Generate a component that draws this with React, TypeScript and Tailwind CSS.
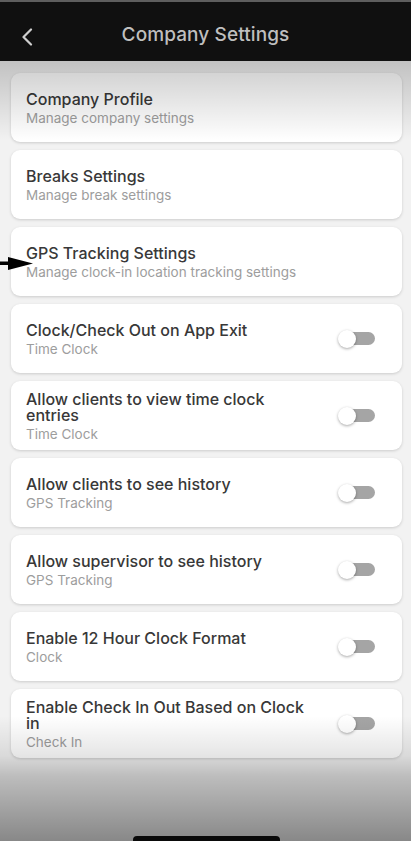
import React from 'react';

interface SettingItem {
  title: string;
  subtitle: string;
  toggle?: boolean;
}

const items: SettingItem[] = [
  { title: 'Company Profile', subtitle: 'Manage company settings' },
  { title: 'Breaks Settings', subtitle: 'Manage break settings' },
  { title: 'GPS Tracking Settings', subtitle: 'Manage clock-in location tracking settings' },
  { title: 'Clock/Check Out on App Exit', subtitle: 'Time Clock', toggle: true },
  { title: 'Allow clients to view time clock entries', subtitle: 'Time Clock', toggle: true },
  { title: 'Allow clients to see history', subtitle: 'GPS Tracking', toggle: true },
  { title: 'Allow supervisor to see history', subtitle: 'GPS Tracking', toggle: true },
  { title: 'Enable 12 Hour Clock Format', subtitle: 'Clock', toggle: true },
  { title: 'Enable Check In Out Based on Clock in', subtitle: 'Check In', toggle: true },
];

const Toggle: React.FC = () => (
  <div className="relative w-[37px] h-[18px] flex-shrink-0">
    <div className="absolute right-0 top-[2.5px] w-[31px] h-[13px] rounded-full bg-[#a5a5a5]" />
    <div className="absolute left-0 top-0 w-[18px] h-[18px] rounded-full bg-white shadow-[0_1px_3px_rgba(0,0,0,0.35)]" />
  </div>
);

export default function App() {
  return (
    <div
      className="relative w-[411px] h-[841px] overflow-hidden bg-[#f2f2f2] flex flex-col"
      style={{ fontFamily: 'Inter, "Noto Sans", sans-serif' }}
    >
      {/* top strip + header */}
      <div className="h-[2px] bg-[#5e5e5e]" />
      <div className="relative z-10 h-[59px] bg-[#101010] flex items-center justify-center pt-[7px]">
        <svg
          className="absolute left-[21px] top-[26px]"
          width="12"
          height="18"
          viewBox="0 0 12 18"
          fill="none"
        >
          <path d="M10 1.5 L2.5 9 L10 16.5" stroke="#cfcfcf" strokeWidth="2.2" strokeLinecap="round" strokeLinejoin="round" />
        </svg>
        <span className="text-[19px] font-medium text-[#bfbfbf] tracking-[0.1px]">Company Settings</span>
      </div>

      {/* shadow under header */}
      <div className="pointer-events-none absolute left-0 right-0 top-[61px] h-[80px] z-10 bg-gradient-to-b from-[rgba(0,0,0,0.2)] to-transparent" />

      {/* settings list */}
      <div className="flex flex-col gap-2 pt-3 pl-[11px] pr-[9px]">
        {items.map((item) => (
          <div
            key={item.title}
            className="h-[69px] bg-white rounded-[9px] shadow-[0_1px_3px_rgba(0,0,0,0.16)] flex items-center justify-between pl-[15px] pr-[27px]"
          >
            <div className="flex flex-col w-[294px] pt-[2px]">
              <div className="text-[16px] leading-4 font-medium text-[#383838]">{item.title}</div>
              <div className="text-[13.5px] leading-4 mt-[3px] text-[#9d9d9d]">{item.subtitle}</div>
            </div>
            {item.toggle && <Toggle />}
          </div>
        ))}
      </div>

      {/* annotation arrow */}
      <svg className="absolute left-0 top-[256px]" width="34" height="15" viewBox="0 0 34 15">
        <rect x="0" y="5.5" width="12" height="3.5" fill="#000" />
        <polygon points="8,1 33,7.5 8,14" fill="#000" />
      </svg>

      {/* bottom darkening */}
      <div
        className="pointer-events-none absolute left-0 right-0 bottom-0 h-[125px]"
        style={{
          background:
            'linear-gradient(to bottom, rgba(0,0,0,0) 0%, rgba(0,0,0,0.1) 32%, rgba(0,0,0,0.22) 48%, rgba(0,0,0,0.44) 100%)',
        }}
      />

      {/* home indicator */}
      <div className="absolute bottom-[-3px] left-[133px] w-[147px] h-[8px] rounded-full bg-[#0a0a0a]" />
    </div>
  );
}
